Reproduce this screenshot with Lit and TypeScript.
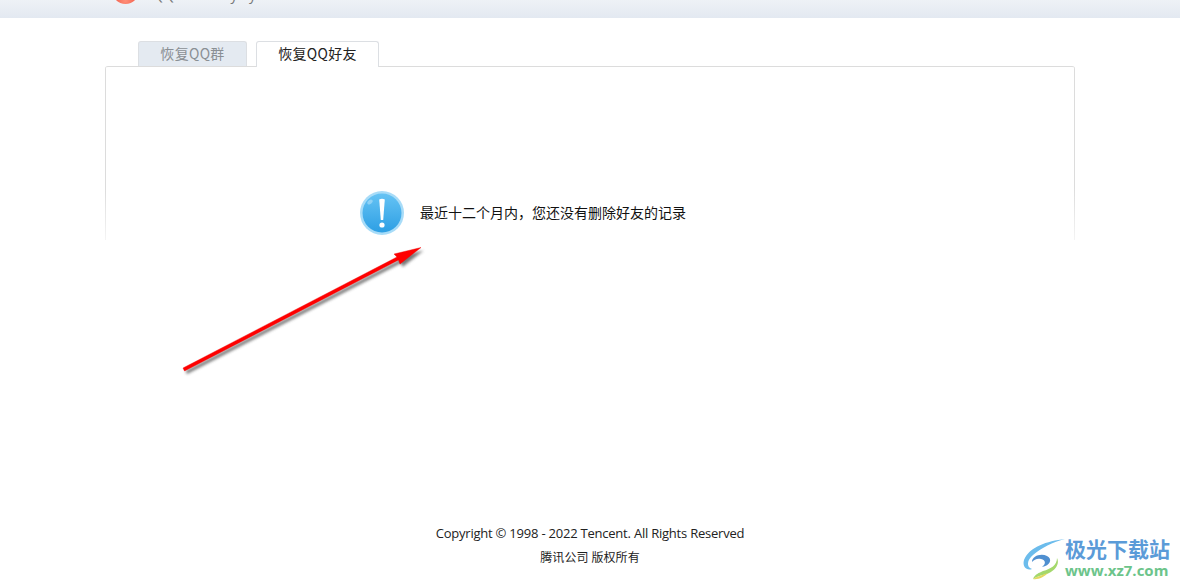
import { LitElement, html, css } from "lit";
import { customElement } from "lit/decorators.js";

@customElement("app-root")
export class AppRoot extends LitElement {
  static styles = css`
    :host {
      display: block;
      position: relative;
      width: 1180px;
      height: 588px;
      overflow: hidden;
      background: #fff;
      color: #222;
      font-family: "Open Sans", "Noto Sans CJK SC", sans-serif;
    }
    .page { display: flex; flex-direction: column; height: 588px; }
    .header {
      flex: none;
      height: 18px;
      background: linear-gradient(#eef2f6, #e3e9f1);
      display: flex;
      align-items: flex-end;
      gap: 14px;
      padding-left: 112px;
      overflow: hidden;
    }
    .logo {
      flex: none;
      width: 27px;
      height: 27px;
      margin-bottom: 14px;
      border-radius: 50%;
      background: radial-gradient(circle at 50% 88%, #ff8f78, #ea3f30 70%);
    }
    .brand {
      font: 14px/16px "Open Sans", "Noto Sans CJK SC", sans-serif;
      color: #777;
      margin-bottom: 15px;
      white-space: nowrap;
    }
    .tabs {
      flex: none;
      display: flex;
      gap: 9px;
      margin: 23px 0 0 138px;
      height: 25px;
      position: relative;
      z-index: 1;
      font: 14px/22px "Noto Sans CJK SC", sans-serif;
      letter-spacing: 0.3px;
    }
    .tab {
      box-sizing: border-box;
      text-align: center;
      border: 1px solid #dcdfe3;
      border-bottom: 0;
      border-radius: 3px 3px 0 0;
    }
    .tab.off { width: 109px; background: #e4eaf1; color: #8a8f94; }
    .tab.on { width: 123px; height: 26px; background: #fff; color: #222; }
    .panel {
      flex: none;
      box-sizing: border-box;
      width: 970px;
      height: 174px;
      margin-left: 105px;
      border-top: 1px solid #dcdcdc;
      border-radius: 3px 3px 0 0;
      background:
        linear-gradient(#dcdcdc, #dcdcdc 70%, #f4f4f4) left top / 1px 100% no-repeat,
        linear-gradient(#dcdcdc, #dcdcdc 70%, #f4f4f4) right top / 1px 100% no-repeat;
      display: flex;
      align-items: flex-start;
      gap: 15px;
      padding: 123px 0 0 254px;
    }
    .icon { flex: none; width: 46px; height: 46px; display: block; }
    .msg {
      font: 14px/20px "Noto Sans CJK SC", sans-serif;
      color: #111;
      margin-top: 12px;
      white-space: nowrap;
    }
    .footer {
      margin-top: auto;
      padding-bottom: 19px;
      text-align: center;
      color: #222;
    }
    .copy { font: 13px/24px "Open Sans", sans-serif; letter-spacing: -0.22px; }
    .cn { font: 12px/24px "Noto Sans CJK SC", sans-serif; letter-spacing: 0.1px; }
    .arrow { position: absolute; left: 0; top: 0; pointer-events: none; }
    .wm {
      position: absolute;
      left: 1021px;
      top: 537px;
      display: flex;
      gap: 2px;
    }
    .wm-logo { overflow: visible; margin-top: 1px; }
    .wm-text { display: flex; flex-direction: column; gap: 2px; }
    .wm-title {
      font: 700 21px/23px "Noto Sans CJK SC", sans-serif;
      color: #5b9bd8;
      white-space: nowrap;
    }
    .wm-url {
      font: 700 15px/17px "Open Sans", sans-serif;
      color: #6cc48a;
      white-space: nowrap;
    }
  `;

  render() {
    return html`
      <div class="page">
        <div class="header">
          <div class="logo"></div>
          <div class="brand">QQ Recovery System</div>
        </div>
        <div class="tabs">
          <div class="tab off">恢复QQ群</div>
          <div class="tab on">恢复QQ好友</div>
        </div>
        <div class="panel">
          <svg class="icon" viewBox="0 0 46 46">
            <defs>
              <linearGradient id="ig" x1="0" y1="0" x2="0" y2="1">
                <stop offset="0" stop-color="#66c3f4" />
                <stop offset="1" stop-color="#2d9fe4" />
              </linearGradient>
            </defs>
            <circle cx="23" cy="23" r="22" fill="#a8dcf8" />
            <circle cx="23" cy="23" r="19.5" fill="url(#ig)" />
            <ellipse cx="11" cy="12" rx="3" ry="2" fill="#a5dcf8" opacity=".7" transform="rotate(-40 11 12)" />
            <path d="M20.2 9.5 Q23 8 25.8 9.5 L24.2 30 H21.8 Z" fill="#fff" />
            <circle cx="23" cy="35" r="2.6" fill="#fff" />
          </svg>
          <div class="msg">最近十二个月内，您还没有删除好友的记录</div>
        </div>
        <div class="footer">
          <div class="copy">Copyright © 1998 - 2022 Tencent. All Rights Reserved</div>
          <div class="cn">腾讯公司 版权所有</div>
        </div>
      </div>

      <svg class="arrow" width="1180" height="588" viewBox="0 0 1180 588">
        <defs>
          <filter id="sh" x="-20%" y="-20%" width="140%" height="140%">
            <feGaussianBlur stdDeviation="1.6" />
          </filter>
        </defs>
        <g transform="translate(2.5 3)" filter="url(#sh)" fill="#555" opacity=".8">
          <path d="M183 368 L397 257 L394 254 L421 247.5 L400 264 L398.5 260 L184.5 371 Z" />
        </g>
        <path d="M183 368 L397 257 L394 254 L421 247.5 L400 264 L398.5 260 L184.5 371 Z" fill="#f00" stroke="#e00" stroke-width=".4" />
      </svg>

      <div class="wm">
        <svg class="wm-logo" width="42" height="42" viewBox="0 0 42 42">
          <path d="M44 1 C26 3 8 9 3 22 C1 29 6 33 11 31 C5 29 6 22 12 17 C20 10 32 4 44 1 Z" fill="#6cbcec" />
          <path d="M11 24 C11 18 20 15 26 18 C32 21 29 28 21 29 C25 26 25 22 20 21 C16 20 13 22 11 24 Z" fill="#4f8fd0" />
          <path d="M36 20 C40 28 30 36 22 37 C18 38 15 39 12 41 C14 36 18 35 22 33 C30 31 36 27 36 20 Z" fill="#a4d86c" />
          <path d="M12 41 C17 38 22 37 27 35 C23 39 17 42 12 41 Z" fill="#e4d860" />
        </svg>
        <div class="wm-text">
          <div class="wm-title">极光下载站</div>
          <div class="wm-url">www.xz7.com</div>
        </div>
      </div>
    `;
  }
}
